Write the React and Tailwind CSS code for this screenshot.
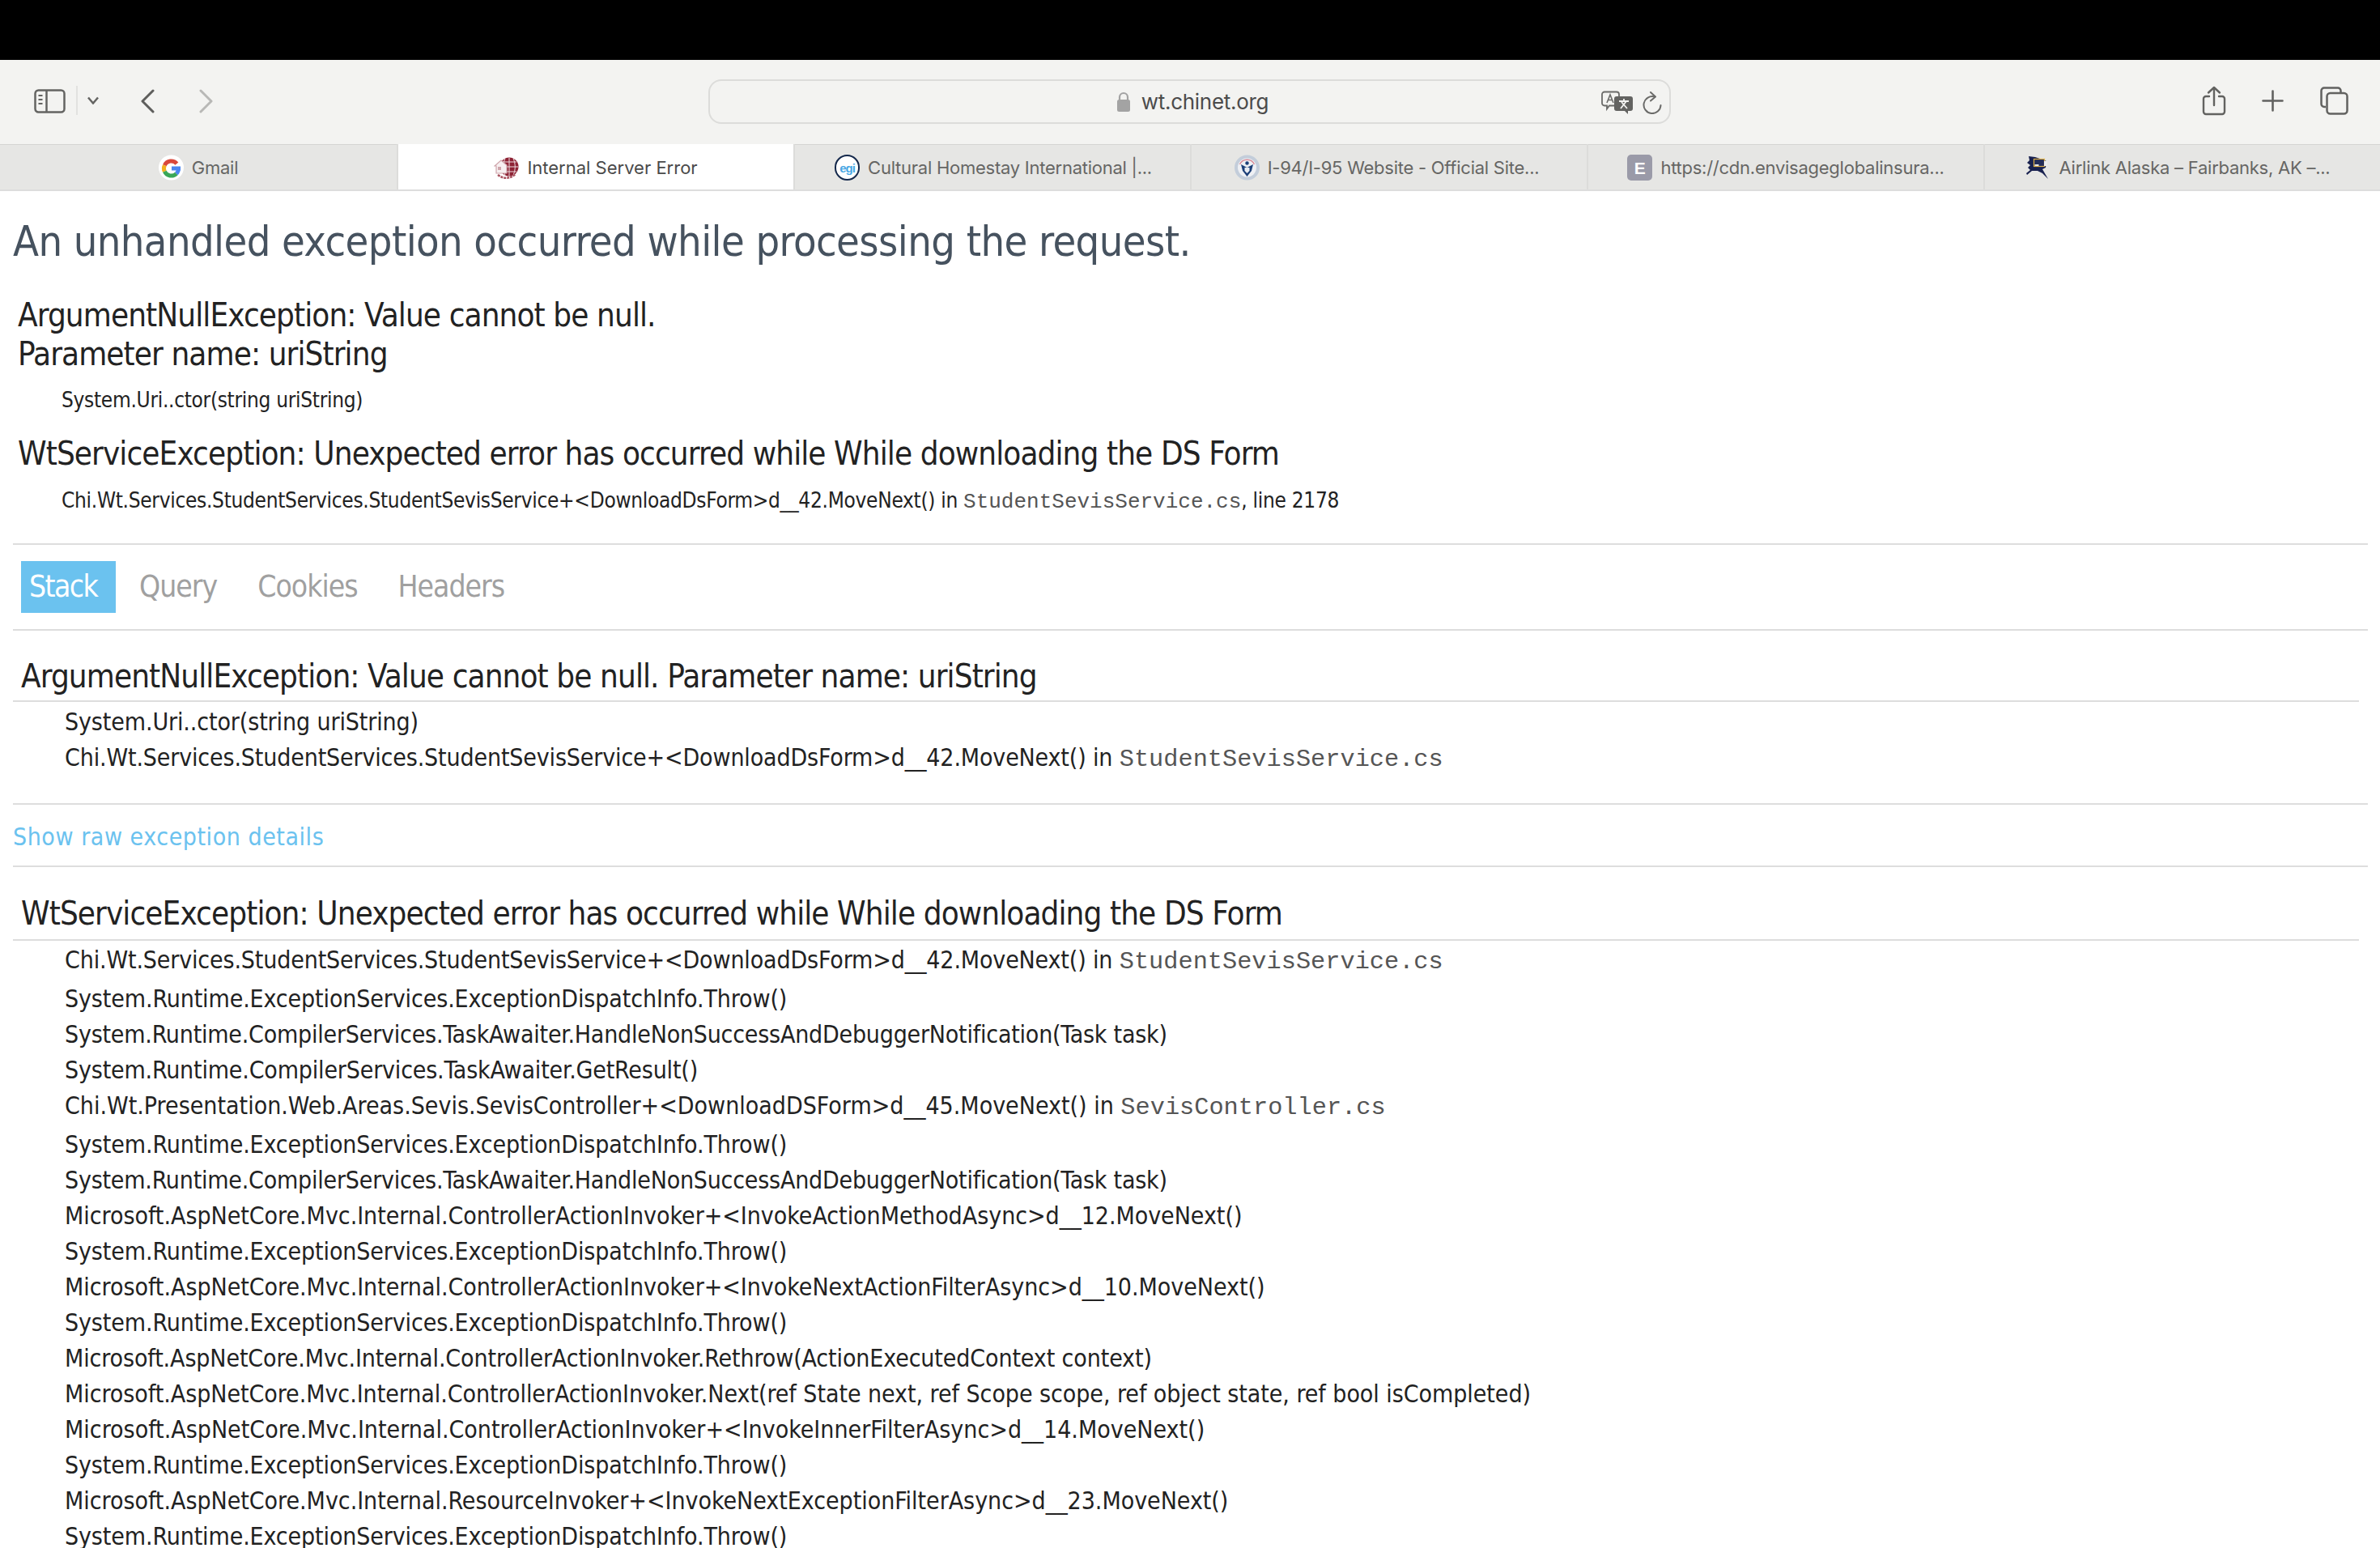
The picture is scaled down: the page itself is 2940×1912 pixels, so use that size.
import React from 'react';

const Gicon = () => (
  <svg width="31" height="32" viewBox="0 0 31 32">
    <circle cx="15.500" cy="16" r="15.500" fill="#fff" />
    <g fill="none" strokeWidth="5">
      <path d="M22.400 11.200A9 9 0 0 0 7.300 13.200" stroke="#d9483b" />
      <path d="M7.300 13.200A9 9 0 0 0 7.300 20.800" stroke="#f2b01e" />
      <path d="M7.300 20.800A9 9 0 0 0 21.900 23.400" stroke="#3aa757" />
      <path d="M21.900 23.400A9 9 0 0 0 24.500 17" stroke="#4a85f0" />
    </g>
    <rect x="16" y="14.500" width="11" height="5" fill="#4a85f0" />
  </svg>
);

const ChiIcon = () => (
  <svg width="31" height="32" viewBox="0 0 31 32">
    <circle cx="19" cy="15" r="11.500" fill="#8e2335" />
    <path d="M19 4v22M8 15h22M10 9h18M10 21h18M14 4.500c-3 7-3 14 0 21M24 4.500c3 7 3 14 0 21" stroke="#eddde0" strokeWidth="1" fill="none" />
    <path d="M1 14l8-7 7 6v10H3v-9z" fill="#f7f0f1" stroke="#cfa6ac" strokeWidth="1.200" />
    <rect x="5" y="15" width="4" height="4" fill="#cfa6ac" />
    <path d="M5 25q11 8 22-1" stroke="#a8525f" strokeWidth="2.500" fill="none" strokeDasharray="3 1" />
  </svg>
);

const EgiIcon = () => (
  <div className="w-[31px] h-[32px] rounded-full border-2 border-[#14284b] flex items-center justify-center bg-white overflow-hidden">
    <span className="text-[#4aa8e4] text-[15px] font-bold tracking-[-1px] leading-none font-['Liberation_Sans',sans-serif]">egi</span>
  </div>
);

const DhsIcon = () => (
  <svg width="31" height="32" viewBox="0 0 31 32">
    <circle cx="15.500" cy="16" r="15.500" fill="#c3cdda" />
    <circle cx="15.500" cy="16" r="11.500" fill="#eef0f4" />
    <path d="M6.500 12a10 10 0 0 1 18 0" fill="none" stroke="#d98a96" strokeWidth="1.500" />
    <path d="M8 12l7.500 4 7.500-4-2 8-5.500 7-5.500-7z" fill="#1c3f78" />
    <circle cx="15.500" cy="10.500" r="2.200" fill="#1c3f78" />
    <path d="M12.500 16h6v4l-3 3-3-3z" fill="#e8ecf3" />
  </svg>
);

const EIcon = () => (
  <div className="w-[31px] h-[32px] rounded-[5px] bg-[#9a9aa8] flex items-center justify-center">
    <span className="text-white text-[21px] font-bold leading-none font-['Liberation_Sans',sans-serif]">E</span>
  </div>
);

const AlaskaIcon = () => (
  <svg width="32" height="32" viewBox="10 8 32 32">
    <path d="M14 10l8 1 6 2 8 3-1 8-4 2 7 12-7-7-6-3h-7l-6 5-1-2 5-4-3-3 3-3-4-3 3-3z" fill="#18214f" />
    <rect x="20.500" y="13.500" width="13" height="9" fill="#232c58" stroke="#dcae45" strokeWidth="1.200" />
    <rect x="33" y="16" width="3.500" height="6" fill="#eeeeee" />
    <rect x="21.500" y="20" width="5" height="2" fill="#e6e6e6" />
  </svg>
);

const tabs = [
  { title: 'Gmail', icon: <Gicon />, box: 'flex items-center justify-center gap-[10px] pt-[2px]' },
  { title: 'Internal Server Error', icon: <ChiIcon />, active: true, box: 'flex items-center justify-center gap-[10px] pt-[2px] bg-white border-l-2 border-[#dcdcda]' },
  { title: 'Cultural Homestay International |...', icon: <EgiIcon />, box: 'flex items-center justify-center gap-[10px] pt-[2px] pl-[2px] border-l-2 border-[#dcdcda]' },
  { title: 'I-94/I-95 Website - Official Site...', icon: <DhsIcon />, box: 'flex items-center justify-center gap-[10px] pt-[2px] pr-[6px] border-l-2 border-[#dcdcda]' },
  { title: 'https://cdn.envisageglobalinsura...', icon: <EIcon />, box: 'flex items-center justify-center gap-[10px] pt-[2px] border-l-2 border-[#dcdcda]' },
  { title: 'Airlink Alaska – Fairbanks, AK –...', icon: <AlaskaIcon />, box: 'flex items-center justify-center gap-[10px] pt-[2px] pr-[12px] border-l-2 border-[#dcdcda]' },
];

const Toolbar = () => (
  <div className="h-[104px] bg-[#f3f3f1] flex items-center relative">
    {/* left controls */}
    <svg className="ml-[42px] mt-[-3px]" width="39" height="30" viewBox="0 0 39 30" fill="none" stroke="#646462" strokeWidth="2.500">
      <rect x="1.500" y="1.500" width="36" height="27" rx="4" />
      <path d="M15.500 2v26" />
      <path d="M5.500 8h5M5.500 13h5M5.500 18h5" strokeWidth="2.200" />
    </svg>
    <div className="w-[2px] h-[36px] bg-[#e2e2e0] ml-[13px] mt-[-4px]" />
    <svg className="ml-[11px] mt-[-4px]" width="16" height="10" viewBox="0 0 16 10" fill="none" stroke="#646462" strokeWidth="2.500">
      <path d="M2 1.500l6 7 6-7" />
    </svg>
    <svg className="ml-[50px] mt-[-3px]" width="18" height="30" viewBox="0 0 18 30" fill="none" stroke="#5e5e5c" strokeWidth="3" strokeLinecap="round" strokeLinejoin="round">
      <path d="M16 2L3 15l13 13" />
    </svg>
    <svg className="ml-[55px] mt-[-3px]" width="18" height="30" viewBox="0 0 18 30" fill="none" stroke="#b8b8b6" strokeWidth="3" strokeLinecap="round" strokeLinejoin="round">
      <path d="M2 2l13 13L2 28" />
    </svg>

    {/* address bar */}
    <div className="absolute left-[875px] top-[24px] w-[1189px] h-[55px] rounded-[16px] border-2 border-[#dcdcda] flex items-center justify-center">
      <svg className="ml-[7px] mt-[1px]" width="18" height="26" viewBox="0 0 18 26" fill="none">
        <path d="M4 11V7a5 5 0 0 1 10 0v4" stroke="#a3a3a3" strokeWidth="2.200" />
        <rect x="1" y="10" width="16" height="15" rx="2.500" fill="#a3a3a3" />
      </svg>
      <span className="ml-[13px] text-[26px] leading-none tracking-[-0.3px] text-[#4b4b4b] font-['Inter',sans-serif]">wt.chinet.org</span>
      <div className="absolute right-[9px] top-[12px] flex items-center gap-[11px]">
        <svg width="40" height="30" viewBox="0 0 40 30">
          <path d="M4 1.500h15a3 3 0 0 1 3 3v11a3 3 0 0 1-3 3H10l-3 4v-4H4a3 3 0 0 1-3-3v-11a3 3 0 0 1 3-3z" fill="#f3f3f1" stroke="#6b6b69" strokeWidth="1.800" />
          <path d="M7 15l4-10 4 10M8.500 11.500h5" fill="none" stroke="#6b6b69" strokeWidth="1.600" />
          <path d="M19 7h17a3 3 0 0 1 3 3v12a3 3 0 0 1-3 3h-3v4l-4-4h-10a3 3 0 0 1-3-3V10a3 3 0 0 1 3-3z" fill="#636361" />
          <path d="M22 13h12M28 10v3M24 22l7-9M32 22l-7-8" fill="none" stroke="#f3f3f1" strokeWidth="1.800" />
        </svg>
        <svg width="24" height="28" viewBox="0 0 24 28" fill="none" stroke="#6b6b69" strokeWidth="2" strokeLinecap="round" strokeLinejoin="round">
          <path d="M15 6.500A10.500 10.500 0 1 0 22.500 17" />
          <path d="M10 1l6 5.500-6 5" />
        </svg>
      </div>
    </div>

    {/* right controls */}
    <div className="ml-auto mr-[39px] flex items-center mt-[-3px]">
      <svg width="30" height="37" viewBox="0 0 30 37" fill="none" stroke="#626260" strokeWidth="2.400" strokeLinecap="round" strokeLinejoin="round">
        <path d="M9 13H5a3 3 0 0 0-3 3v16a3 3 0 0 0 3 3h20a3 3 0 0 0 3-3V16a3 3 0 0 0-3-3h-4" />
        <path d="M15 24V2M8 8.500L15 2l7 6.500" />
      </svg>
      <svg className="ml-[44px]" width="27" height="27" viewBox="0 0 27 27" fill="none" stroke="#626260" strokeWidth="2.600" strokeLinecap="round">
        <path d="M13.500 1.500v24M1.500 13.500h24" />
      </svg>
      <svg className="ml-[45px]" width="35" height="35" viewBox="0 0 35 35" fill="none" stroke="#626260" strokeWidth="2.500">
        <path d="M7 25H5a3.500 3.500 0 0 1-3.500-3.500V5A3.500 3.500 0 0 1 5 1.500h17A3.500 3.500 0 0 1 25.500 5v2" />
        <rect x="8.500" y="8" width="25" height="25.500" rx="4" />
      </svg>
    </div>
  </div>
);

const TabBar = () => (
  <div className="h-[58px] grid grid-cols-6 border-b-2 border-[#dddddd] bg-[#e6e6e4] shadow-[inset_0_1px_0_#d4d4d2]">
    {tabs.map((tab, i) => (
      <div key={i} className={tab.box}>
        {tab.icon}
        <span className={tab.active ? 'text-[22px] leading-none text-[#4a4a4a] font-["Inter",sans-serif]' : 'text-[22px] leading-none tracking-[-0.25px] text-[#666664] font-["Inter",sans-serif]'}>
          {tab.title}
        </span>
      </div>
    ))}
  </div>
);

const Mono = ({ size, children }) => (
  <code className={size === 'lg' ? "text-[30.300px] tracking-normal text-[#555] font-['Liberation_Mono',monospace]" : "text-[26px] tracking-normal text-[#555] font-['Liberation_Mono',monospace]"}>{children}</code>
);

const stack = [
  ['Chi.Wt.Services.StudentServices.StudentSevisService+<DownloadDsForm>d__42.MoveNext()', 'StudentSevisService.cs', 'tracking-[-0.15px]'],
  ['System.Runtime.ExceptionServices.ExceptionDispatchInfo.Throw()', null, 'tracking-[-0.12px]'],
  ['System.Runtime.CompilerServices.TaskAwaiter.HandleNonSuccessAndDebuggerNotification(Task task)', null, 'tracking-[-0.22px]'],
  ['System.Runtime.CompilerServices.TaskAwaiter.GetResult()', null, 'tracking-[-0.18px]'],
  ['Chi.Wt.Presentation.Web.Areas.Sevis.SevisController+<DownloadDSForm>d__45.MoveNext()', 'SevisController.cs', 'tracking-[0px]'],
  ['System.Runtime.ExceptionServices.ExceptionDispatchInfo.Throw()', null, 'tracking-[-0.12px]'],
  ['System.Runtime.CompilerServices.TaskAwaiter.HandleNonSuccessAndDebuggerNotification(Task task)', null, 'tracking-[-0.22px]'],
  ['Microsoft.AspNetCore.Mvc.Internal.ControllerActionInvoker+<InvokeActionMethodAsync>d__12.MoveNext()', null, 'tracking-[-0.03px]'],
  ['System.Runtime.ExceptionServices.ExceptionDispatchInfo.Throw()', null, 'tracking-[-0.12px]'],
  ['Microsoft.AspNetCore.Mvc.Internal.ControllerActionInvoker+<InvokeNextActionFilterAsync>d__10.MoveNext()', null, 'tracking-[-0.03px]'],
  ['System.Runtime.ExceptionServices.ExceptionDispatchInfo.Throw()', null, 'tracking-[-0.12px]'],
  ['Microsoft.AspNetCore.Mvc.Internal.ControllerActionInvoker.Rethrow(ActionExecutedContext context)', null, 'tracking-[-0.12px]'],
  ['Microsoft.AspNetCore.Mvc.Internal.ControllerActionInvoker.Next(ref State next, ref Scope scope, ref object state, ref bool isCompleted)', null, 'tracking-[-0.05px]'],
  ['Microsoft.AspNetCore.Mvc.Internal.ControllerActionInvoker+<InvokeInnerFilterAsync>d__14.MoveNext()', null, 'tracking-[0px]'],
  ['System.Runtime.ExceptionServices.ExceptionDispatchInfo.Throw()', null, 'tracking-[-0.12px]'],
  ['Microsoft.AspNetCore.Mvc.Internal.ResourceInvoker+<InvokeNextExceptionFilterAsync>d__23.MoveNext()', null, 'tracking-[-0.03px]'],
  ['System.Runtime.ExceptionServices.ExceptionDispatchInfo.Throw()', null, 'tracking-[-0.12px]'],
];

const Row = ({ text, file, spacing }) => (
  <div className={spacing}>
    <div className={file ? 'h-[48px] leading-[44px] whitespace-nowrap' : 'h-[44px] leading-[44px] whitespace-nowrap'}>
      {text}
      {file && <> in <Mono size="lg">{file}</Mono></>}
    </div>
  </div>
);

const App = () => {
  return (
    <div className="w-[2940px] h-[1912px] overflow-hidden bg-white font-['DejaVu_Sans',sans-serif] font-stretch-condensed text-[#222]">
      <div className="h-[74px] bg-black" />
      <Toolbar />
      <TabBar />

      <div className="pl-[16px] pr-[15px]">
        <h1 className="mt-[30px] text-[52px] leading-[64px] tracking-[-0.6px] text-[#46525f]">An unhandled exception occurred while processing the request.</h1>

        <div className="pl-[6px] mt-[35px] text-[40px] leading-[48px] tracking-[-0.9px]">
          ArgumentNullException: Value cannot be null.<br />Parameter name: uriString
        </div>
        <div className="pl-[60px] mt-[13px] text-[26px] leading-[40px] tracking-[-0.3px]">System.Uri..ctor(string uriString)</div>

        <div className="pl-[6px] mt-[22px] text-[40px] leading-[48px] tracking-[-0.9px]">WtServiceException: Unexpected error has occurred while While downloading the DS Form</div>
        <div className="pl-[60px] mt-[14px] text-[26px] leading-[40px] tracking-[-0.3px]">
          Chi.Wt.Services.StudentServices.StudentSevisService+&lt;DownloadDsForm&gt;d__42.MoveNext() in <Mono>StudentSevisService.cs</Mono>, line 2178
        </div>

        <div className="mt-[31px] border-t-2 border-[#ddd]" />
        <div className="flex mt-[20px] ml-[10px] text-[37px] leading-[64px] tracking-[-1px] text-[#a0a0a0]">
          <div className="w-[117px] h-[64px] pl-[10px] bg-[#6bc2ef] text-white tracking-[-1.6px]">Stack</div>
          <div className="ml-[29px]">Query</div>
          <div className="ml-[50px]">Cookies</div>
          <div className="ml-[50px]">Headers</div>
        </div>
        <div className="mt-[20px] border-t-2 border-[#ddd]" />

        <div className="mt-[32px] ml-[10px] text-[40px] leading-[48px] tracking-[-0.9px]">ArgumentNullException: Value cannot be null. Parameter name: uriString</div>
        <div className="mt-[6px] mr-[11px] border-t-2 border-[#ddd]" />
        <div className="pl-[64px] pt-[3px] text-[30px] tracking-[-0.12px]">
          <div className="h-[44px] leading-[44px]">System.Uri..ctor(string uriString)</div>
          <Row text="Chi.Wt.Services.StudentServices.StudentSevisService+<DownloadDsForm>d__42.MoveNext()" file="StudentSevisService.cs" spacing="tracking-[-0.15px]" />
        </div>

        <div className="mt-[30px] border-t-2 border-[#ddd]" />
        <div className="mt-[22px] text-[30px] leading-[36px] tracking-[0.55px] text-[#6bc2ef]">Show raw exception details</div>
        <div className="mt-[17px] border-t-2 border-[#ddd]" />

        <div className="mt-[33px] ml-[10px] text-[40px] leading-[48px] tracking-[-0.9px]">WtServiceException: Unexpected error has occurred while While downloading the DS Form</div>
        <div className="mt-[8px] mr-[11px] border-t-2 border-[#ddd]" />
        <div className="pl-[64px] pt-[2px] text-[30px]">
          {stack.map(([text, file, spacing], i) => (
            <Row key={i} text={text} file={file} spacing={spacing} />
          ))}
        </div>
      </div>
    </div>
  );
};

export default App;
